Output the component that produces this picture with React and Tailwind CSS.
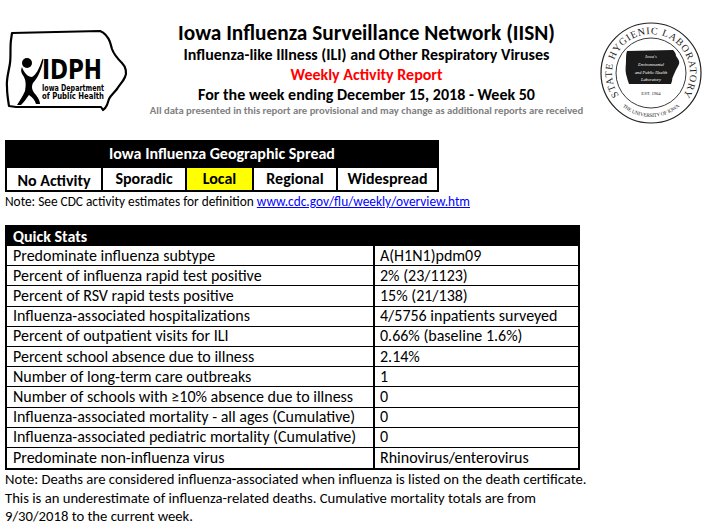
import React from "react";

const rows = [
  ["Predominate influenza subtype", "A(H1N1)pdm09"],
  ["Percent of influenza rapid test positive", "2% (23/1123)"],
  ["Percent of RSV rapid tests positive", "15% (21/138)"],
  ["Influenza-associated hospitalizations", "4/5756 inpatients surveyed"],
  ["Percent of outpatient visits for ILI", "0.66% (baseline 1.6%)"],
  ["Percent school absence due to illness", "2.14%"],
  ["Number of long-term care outbreaks", "1"],
  ["Number of schools with \u226510% absence due to illness", "0"],
  ["Influenza-associated mortality - all ages (Cumulative)", "0"],
  ["Influenza-associated pediatric mortality (Cumulative)", "0"],
  ["Predominate non-influenza virus", "Rhinovirus/enterovirus"],
];

function IdphLogo() {
  const narrow = "'Liberation Sans Narrow','DejaVu Sans Condensed','Liberation Sans',sans-serif";
  return (
    <svg width="126" height="86" viewBox="0 0 126 86" className="block">
      <path
        d="M8,6 L96,4 C101,6 104,10 106,15 L108,22 C110,28 114,32 118,36 C122,40 123,46 121,50 C119,55 115,58 113,62 C110,66 107,68 105,72 L103,78 C102,80 101,82 99,83 L97,80 L12,80 L5,79 C4,73 3,67 3,60 C2,52 5,44 6,36 C7,28 6,20 7,13 Z"
        fill="white"
        stroke="black"
        strokeWidth="2.2"
        strokeLinejoin="round"
      />
      <circle cx="23" cy="36" r="5" fill="black" />
      <path
        d="M18,40 C20,46 24,50 28,50 C32,48 35,42 38,33 C39,31 40,31 39,35 C37,44 33,52 29,56 C27,60 28,64 32,68 C35,72 36,75 36,77 L32,77 C31,73 28,70 25,68 C22,72 20,75 17,78 L13,78 C16,73 19,69 21,64 C22,58 22,54 20,50 C18,47 16,44 18,40 Z"
        fill="black"
      />
      <text x="38" y="52" textLength="60" lengthAdjust="spacingAndGlyphs" fontFamily={narrow} fontWeight="700" fontSize="27" fill="black">
        IDPH
      </text>
      <text x="38" y="64" textLength="62" lengthAdjust="spacingAndGlyphs" fontFamily={narrow} fontWeight="700" fontSize="8.5" fill="black">
        Iowa Department
      </text>
      <text x="38" y="72" textLength="62" lengthAdjust="spacingAndGlyphs" fontFamily={narrow} fontWeight="700" fontSize="8.5" fill="black">
        of Public Health
      </text>
    </svg>
  );
}

function Seal() {
  const serif = "'Liberation Serif','DejaVu Serif',serif";
  return (
    <svg width="104" height="104" viewBox="0 0 104 104" className="block">
      <defs>
        <path id="sealTop" d="M23,78.1 A39,39 0 1 1 81,78.1" />
        <path id="sealBot" d="M22.6,84.7 A44,44 0 0 0 81.4,84.7" />
      </defs>
      <circle cx="52" cy="52" r="50" fill="white" stroke="#222" strokeWidth="1.2" />
      <circle cx="52" cy="52" r="35" fill="white" stroke="#222" strokeWidth="0.9" />
      <text fontFamily={serif} fontSize="10" fill="#222">
        <textPath href="#sealTop" startOffset="50%" textAnchor="middle" textLength="170" lengthAdjust="spacing">
          STATE HYGIENIC LABORATORY
        </textPath>
      </text>
      <text fontFamily={serif} fontSize="5.2" fill="#222">
        <textPath href="#sealBot" startOffset="50%" textAnchor="middle" textLength="62" lengthAdjust="spacing">
          THE UNIVERSITY OF IOWA
        </textPath>
      </text>
      <path
        d="M28,30 L74,29 C76,31 77,33 77,35 C79,38 81,40 80,43 C79,46 77,48 76,51 C75,54 73,56 73,60 L72,63 L30,63 C29,60 28,57 27,53 C26,48 27,44 27,40 C27,36 27,33 28,30 Z"
        fill="#1a1a1a"
      />
      <g fontFamily={serif} fontStyle="italic" fontSize="4.4" fill="white" textAnchor="middle">
        <text x="52" y="37">Iowa's</text>
        <text x="52" y="45">Environmental</text>
        <text x="52" y="53">and Public Health</text>
        <text x="52" y="60">Laboratory</text>
      </g>
      <text x="52" y="74" fontFamily={serif} fontSize="4.6" fill="#222" textAnchor="middle">
        EST. 1904
      </text>
    </svg>
  );
}

export default function App() {
  return (
    <div className="w-[713px] h-[532px] bg-white text-black overflow-hidden font-['Carlito','Calibri','Lato',sans-serif]">
      {/* Header */}
      <div className="flex h-[140px]">
        <div className="w-[150px] shrink-0 pl-[4px] pt-[27px]">
          <IdphLogo />
        </div>
        <div className="flex-1 min-w-0 flex flex-col items-center pt-[21px] font-bold">
          <div className="text-[21.33px] leading-[24px] whitespace-nowrap">
            Iowa Influenza Surveillance Network (IISN)
          </div>
          <div className="text-[16px] leading-[20px] whitespace-nowrap">
            Influenza-like Illness (ILI) and Other Respiratory Viruses
          </div>
          <div className="text-[16px] leading-[20px] whitespace-nowrap text-[#ff0000]">
            Weekly Activity Report
          </div>
          <div className="text-[16px] leading-[20px] whitespace-nowrap">
            For the week ending December 15, 2018 - Week 50
          </div>
          <div className="text-[10.67px] leading-[11px] whitespace-nowrap text-[#808080]">
            All data presented in this report are provisional and may change as additional reports are received
          </div>
        </div>
        <div className="w-[130px] shrink-0 flex justify-end pr-[10px] pt-[21px]">
          <Seal />
        </div>
      </div>

      {/* Geographic spread */}
      <div className="ml-[5px] w-[434px] bg-black">
        <div className="h-[28px] flex items-center justify-center text-white font-bold text-[16px]">
          Iowa Influenza Geographic Spread
        </div>
        <div className="flex gap-[2px] px-[2px] pb-[2px] font-bold text-[16px]">
          <div className="w-[94px] h-[22px] bg-white flex items-center justify-center pt-[3px]">No Activity</div>
          <div className="w-[82px] h-[22px] bg-white flex items-center justify-center">Sporadic</div>
          <div className="w-[65px] h-[22px] bg-[#ffff00] flex items-center justify-center">Local</div>
          <div className="w-[82px] h-[22px] bg-white flex items-center justify-center">Regional</div>
          <div className="w-[99px] h-[22px] bg-white flex items-center justify-center">Widespread</div>
        </div>
      </div>
      <div className="pl-[5px] text-[13.33px] leading-[20px] whitespace-nowrap">
        Note: See CDC activity estimates for definition{" "}
        <span className="text-[#0000ff] underline">www.cdc.gov/flu/weekly/overview.htm</span>
      </div>

      {/* Quick stats */}
      <div className="ml-[5px] mt-[13px] w-[575px] border-2 border-black">
        <div className="h-[19px] bg-black text-white font-bold text-[16px] leading-[19px] pl-[6px]">
          Quick Stats
        </div>
        {rows.map(([k, v], i) => (
          <div
            key={i}
            className={
              "flex h-[20.2px] text-[16px] " +
              (i < rows.length - 1 ? "border-b border-black" : "")
            }
          >
            <div className="w-[368px] shrink-0 border-r-2 border-black pl-[6px] flex items-center whitespace-nowrap">
              {k}
            </div>
            <div className="flex-1 pl-[5px] flex items-center whitespace-nowrap">{v}</div>
          </div>
        ))}
      </div>
      <div className="pl-[5px] text-[14.67px] leading-[18.5px]">
        <div className="whitespace-nowrap">
          Note: Deaths are considered influenza-associated when influenza is listed on the death certificate.
        </div>
        <div className="whitespace-nowrap">
          This is an underestimate of influenza-related deaths. Cumulative mortality totals are from
        </div>
        <div className="whitespace-nowrap">9/30/2018 to the current week.</div>
      </div>
    </div>
  );
}
